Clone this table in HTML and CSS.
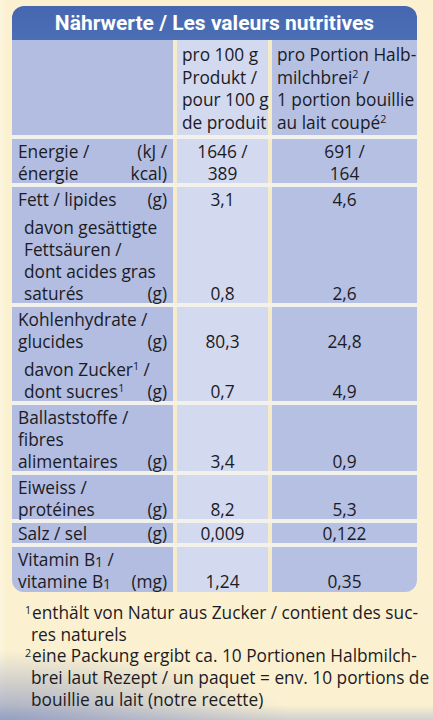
FILE: index.html
```html
<!DOCTYPE html>
<html lang="de">
<head>
<meta charset="utf-8">
<title>Nährwerte / Les valeurs nutritives</title>
<link rel="stylesheet" href="styles.css">
</head>
<body>
<div class="page">
  <div class="table">
    <div class="title">Nährwerte / Les valeurs nutritives</div>

    <div class="row head">
      <div class="cell c1"></div>
      <div class="cell c2 left">
        <div class="ln">pro 100 g</div>
        <div class="ln">Produkt /</div>
        <div class="ln">pour 100 g</div>
        <div class="ln">de produit</div>
      </div>
      <div class="cell c3 left">
        <div class="ln">pro Portion Halb-</div>
        <div class="ln">milchbrei<sup>2</sup> /</div>
        <div class="ln">1 portion bouillie</div>
        <div class="ln">au lait coupé<sup>2</sup></div>
      </div>
    </div>

    <div class="row">
      <div class="cell c1">
        <div class="ln lab"><span>Energie /</span><span>(kJ /</span></div>
        <div class="ln lab"><span>énergie</span><span>kcal)</span></div>
      </div>
      <div class="cell c2">
        <div class="ln">1646 /</div>
        <div class="ln">389</div>
      </div>
      <div class="cell c3">
        <div class="ln">691 /</div>
        <div class="ln">164</div>
      </div>
    </div>

    <div class="row">
      <div class="cell c1">
        <div class="ln lab"><span>Fett / lipides</span><span>(g)</span></div>
        <div class="sp"></div>
        <div class="ln sub">davon gesättigte</div>
        <div class="ln sub">Fettsäuren /</div>
        <div class="ln sub">dont acides gras</div>
        <div class="ln lab sub"><span>saturés</span><span>(g)</span></div>
      </div>
      <div class="cell c2">
        <div class="ln">3,1</div>
        <div class="sp"></div>
        <div class="ln">&nbsp;</div>
        <div class="ln">&nbsp;</div>
        <div class="ln">&nbsp;</div>
        <div class="ln">0,8</div>
      </div>
      <div class="cell c3">
        <div class="ln">4,6</div>
        <div class="sp"></div>
        <div class="ln">&nbsp;</div>
        <div class="ln">&nbsp;</div>
        <div class="ln">&nbsp;</div>
        <div class="ln">2,6</div>
      </div>
    </div>

    <div class="row">
      <div class="cell c1">
        <div class="ln">Kohlenhydrate /</div>
        <div class="ln lab"><span>glucides</span><span>(g)</span></div>
        <div class="sp"></div>
        <div class="ln sub">davon Zucker<sup>1</sup> /</div>
        <div class="ln lab sub"><span>dont sucres<sup>1</sup></span><span>(g)</span></div>
      </div>
      <div class="cell c2">
        <div class="ln">&nbsp;</div>
        <div class="ln">80,3</div>
        <div class="sp"></div>
        <div class="ln">&nbsp;</div>
        <div class="ln">0,7</div>
      </div>
      <div class="cell c3">
        <div class="ln">&nbsp;</div>
        <div class="ln">24,8</div>
        <div class="sp"></div>
        <div class="ln">&nbsp;</div>
        <div class="ln">4,9</div>
      </div>
    </div>

    <div class="row">
      <div class="cell c1">
        <div class="ln">Ballaststoffe /</div>
        <div class="ln">fibres</div>
        <div class="ln lab"><span>alimentaires</span><span>(g)</span></div>
      </div>
      <div class="cell c2">
        <div class="ln">&nbsp;</div>
        <div class="ln">&nbsp;</div>
        <div class="ln">3,4</div>
      </div>
      <div class="cell c3">
        <div class="ln">&nbsp;</div>
        <div class="ln">&nbsp;</div>
        <div class="ln">0,9</div>
      </div>
    </div>

    <div class="row">
      <div class="cell c1">
        <div class="ln">Eiweiss /</div>
        <div class="ln lab"><span>protéines</span><span>(g)</span></div>
      </div>
      <div class="cell c2">
        <div class="ln">&nbsp;</div>
        <div class="ln">8,2</div>
      </div>
      <div class="cell c3">
        <div class="ln">&nbsp;</div>
        <div class="ln">5,3</div>
      </div>
    </div>

    <div class="row short">
      <div class="cell c1">
        <div class="ln lab"><span>Salz / sel</span><span>(g)</span></div>
      </div>
      <div class="cell c2">
        <div class="ln">0,009</div>
      </div>
      <div class="cell c3">
        <div class="ln">0,122</div>
      </div>
    </div>

    <div class="row last">
      <div class="cell c1">
        <div class="ln">Vitamin B<sub>1</sub> /</div>
        <div class="ln lab"><span>vitamine B<sub>1</sub></span><span>(mg)</span></div>
      </div>
      <div class="cell c2">
        <div class="ln">&nbsp;</div>
        <div class="ln">1,24</div>
      </div>
      <div class="cell c3">
        <div class="ln">&nbsp;</div>
        <div class="ln">0,35</div>
      </div>
    </div>
  </div>

  <div class="notes">
    <div class="fl"><span class="mark">1</span>enthält von Natur aus Zucker / contient des suc-</div>
    <div class="fl">res naturels</div>
    <div class="fl"><span class="mark">2</span>eine Packung ergibt ca. 10 Portionen Halbmilch-</div>
    <div class="fl">brei laut Rezept / un paquet = env. 10 portions de</div>
    <div class="fl">bouillie au lait (notre recette)</div>
  </div>
</div>
</body>
</html>
```

FILE: styles.css
```css
html {
  height: 720px;
  background:
    radial-gradient(ellipse 290px 70px at 0 100%, rgba(125, 140, 190, 0.72), rgba(125, 140, 190, 0) 100%),
    linear-gradient(to bottom, rgba(150, 162, 200, 0) 705px, rgba(150, 162, 200, 0.42) 720px),
    linear-gradient(to right, #fdf6de 0, #fbf1d1 6px, #fbf1d1 100%);
}

body {
  margin: 0;
  font-family: "Open Sans", "Noto Sans", sans-serif;
  font-size: 17.3px;
  color: #1b1b25;
}

.page {
  padding: 6px 16px 0 12px;
}

.table {
  width: 405px;
  border-radius: 12px;
  overflow: hidden;
  background: #f2f1ec;
}

.title {
  background: linear-gradient(to bottom, #4667b0, #4b6eb5);
  color: #ffffff;
  font-family: Roboto, "Open Sans", sans-serif;
  font-weight: 700;
  font-size: 21px;
  height: 34px;
  line-height: 35px;
  text-align: center;
  white-space: nowrap;
}

.row {
  display: grid;
  grid-template-columns: 161px 91px 1fr;
  column-gap: 4px;
  background: #f6edc8;
  margin-top: 4px;
}

.row.head {
  margin-top: 0;
}

.head .cell {
  padding: 2px 0 3px;
}

.c1 {
  background: #b2bde1;
  padding-left: 6px;
  padding-right: 6px;
}

.c2 {
  background: #d3d9ef;
  text-align: center;
}

.c3 {
  background: #b5c0e3;
  text-align: center;
}

.head .c2.left,
.head .c3.left {
  text-align: left;
  padding-left: 5px;
}

.ln {
  white-space: nowrap;
  box-sizing: border-box;
  height: 22px;
  padding-top: 3px;
  line-height: 19px;
}

.head .ln {
  height: 22.5px;
}

.short .ln {
  height: 20px;
  padding-top: 2px;
  line-height: 18px;
}

.last .cell {
  padding-bottom: 2px;
}

.last .ln {
  height: 21.5px;
}

.lab {
  display: flex;
  justify-content: space-between;
  gap: 4px;
}

.sub {
  padding-left: 6px;
}

.sp {
  height: 6px;
}

sup {
  font-size: 0.62em;
  line-height: 0;
  vertical-align: 0.55em;
}

sub {
  font-size: 0.8em;
  line-height: 0;
  vertical-align: -0.1em;
}

.notes {
  margin-top: 10px;
  padding-left: 19px;
  line-height: 21.7px;
}

.fl {
  white-space: nowrap;
}

.mark {
  display: inline-block;
  width: 7px;
  margin-left: -6px;
  font-size: 0.62em;
  line-height: 0;
  vertical-align: 0.5em;
}
```
